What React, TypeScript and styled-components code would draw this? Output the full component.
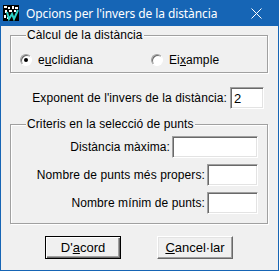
import React from 'react';
import styled, { createGlobalStyle } from 'styled-components';

const GlobalStyle = createGlobalStyle`
  html, body {
    margin: 0;
    padding: 0;
    background: #ffffff;
  }
`;

const Window = styled.div`
  box-sizing: border-box;
  width: 279px;
  height: 271px;
  background: #f0f0f0;
  border: 1px solid #1665b5;
  border-top: none;
  font-family: 'Liberation Sans', Arial, sans-serif;
  font-size: 12px;
  letter-spacing: 0.1px;
  color: #000;
  display: flex;
  flex-direction: column;
`;

const TitleBar = styled.div`
  height: 26px;
  margin: 0 -1px;
  background: #1665b5;
  color: #fff;
  display: flex;
  align-items: center;
  padding: 0 0 0 3px;
  font-family: 'Noto Sans', 'Liberation Sans', sans-serif;
  font-size: 12px;
`;

const TitleText = styled.span`
  margin-left: 7px;
  flex: 1;
  letter-spacing: -0.1px;
`;

const CloseBox = styled.div`
  width: 46px;
  height: 26px;
  display: flex;
  align-items: center;
  justify-content: center;
  margin-left: auto;
  padding-left: 12px;
`;

const Body = styled.div`
  padding: 3px 10px 0 9px;
  display: flex;
  flex-direction: column;
`;

const Group = styled.fieldset<{ $pad: string }>`
  margin: 0;
  min-width: 0;
  padding: ${(p) => p.$pad};
  border: 1px solid #a0a0a0;
  box-shadow: inset 1px 1px 0 #fff, 1px 1px 0 #fff;
`;

const Caption = styled.legend`
  padding: 0 1px 0 1px;
  margin-left: 6px;
  line-height: 13px;
  background: #f0f0f0;
`;

const RadioRow = styled.div`
  display: flex;
  height: 13px;
  align-items: center;
`;

const RadioLabel = styled.label<{ $width: number }>`
  display: flex;
  align-items: center;
  width: ${(p) => p.$width}px;
`;

const RadioDot = styled.span<{ $on?: boolean }>`
  box-sizing: border-box;
  position: relative;
  width: 12px;
  height: 12px;
  border-radius: 50%;
  background: #fff;
  border: 1px solid;
  border-color: #a0a0a0 #fff #fff #a0a0a0;
  box-shadow: inset 1px 1px 0 #696969;
  margin-right: 6px;
  &::after {
    content: '';
    display: ${(p) => (p.$on ? 'block' : 'none')};
    position: absolute;
    left: 3px;
    top: 3px;
    width: 4px;
    height: 4px;
    border-radius: 50%;
    background: #000;
  }
`;

const ExpRow = styled.div`
  display: flex;
  align-items: center;
  justify-content: flex-end;
  margin: 14px 4px 9px 0;
  gap: 3px;
`;

const FieldRow = styled.div`
  display: flex;
  align-items: center;
  justify-content: flex-end;
  gap: 2px;
  height: 22px;
  & + & {
    margin-top: 6px;
  }
`;

const Input = styled.div<{ $width: number }>`
  box-sizing: border-box;
  width: ${(p) => p.$width}px;
  height: 22px;
  background: #fff;
  border: 1px solid;
  border-color: #a0a0a0 #fff #fff #a0a0a0;
  box-shadow: inset 1px 1px 0 #696969, inset -1px -1px 0 #e3e3e3;
  padding: 3px 3px 0 3px;
  font-size: 13px;
  line-height: 15px;
`;

const Buttons = styled.div`
  display: flex;
  gap: 36px;
  padding-left: 35px;
  margin-top: 12px;
`;

const Button = styled.div<{ $default?: boolean }>`
  box-sizing: border-box;
  width: 76px;
  height: 23px;
  display: flex;
  align-items: center;
  justify-content: center;
  background: #f0f0f0;
  border: 1px solid;
  border-color: ${(p) => (p.$default ? '#000' : '#fff #696969 #696969 #fff')};
  box-shadow: ${(p) =>
    p.$default
      ? 'inset 1px 1px 0 #fff, inset -1px -1px 0 #696969, inset -2px -2px 0 #a0a0a0'
      : 'inset -1px -1px 0 #a0a0a0, inset 1px 1px 0 #e3e3e3'};
  font-size: 13px;
  letter-spacing: 0;
`;

const Key = styled.u`
  text-underline-offset: 1px;
`;

const AppIcon = () => (
  <svg width="16" height="16" viewBox="0 0 16 16">
    <rect x="0" y="0" width="16" height="16" fill="#000" />
    <rect x="1" y="1" width="3" height="2" fill="#fff" />
    <rect x="5" y="2" width="2" height="2" fill="#fff" />
    <rect x="9" y="1" width="2" height="3" fill="#fff" />
    <rect x="12" y="2" width="3" height="2" fill="#fff" />
    <rect x="2" y="5" width="2" height="3" fill="#fff" />
    <rect x="6" y="5" width="3" height="2" fill="#fff" />
    <rect x="11" y="5" width="2" height="2" fill="#fff" />
    <rect x="1" y="10" width="2" height="3" fill="#fff" />
    <rect x="4" y="12" width="2" height="2" fill="#fff" />
    <path d="M4 7 L6 14 L9 9 L11 14 L15 5" stroke="#2fd3c8" strokeWidth="2" fill="none" />
  </svg>
);

const CloseIcon = () => (
  <svg width="11" height="11" viewBox="0 0 11 11">
    <path d="M0.5 0.5 L10.5 10.5 M10.5 0.5 L0.5 10.5" stroke="#fff" strokeWidth="1" />
  </svg>
);

export default function App() {
  return (
    <>
      <GlobalStyle />
      <Window>
        <TitleBar>
          <AppIcon />
          <TitleText>Opcions per l'invers de la distància</TitleText>
          <CloseBox>
            <CloseIcon />
          </CloseBox>
        </TitleBar>
        <Body>
          <Group $pad="11px 9px 6px 9px">
            <Caption>Càlcul de la distància</Caption>
            <RadioRow>
              <RadioLabel $width={131}>
                <RadioDot $on />
                <span>
                  e<Key>u</Key>clidiana
                </span>
              </RadioLabel>
              <RadioLabel $width={100}>
                <RadioDot />
                <span>
                  Ei<Key>x</Key>ample
                </span>
              </RadioLabel>
            </RadioRow>
          </Group>
          <ExpRow>
            <span>Exponent de l'invers de la distància:</span>
            <Input $width={34}>2</Input>
          </ExpRow>
          <Group $pad="5px 9px 9px 9px">
            <Caption>Criteris en la selecció de punts</Caption>
            <FieldRow>
              <span>Distància màxima:</span>
              <Input $width={86} />
            </FieldRow>
            <FieldRow>
              <span>Nombre de punts més propers:</span>
              <Input $width={51} />
            </FieldRow>
            <FieldRow>
              <span>Nombre mínim de punts:</span>
              <Input $width={51} />
            </FieldRow>
          </Group>
          <Buttons>
            <Button $default>
              <span>
                D'<Key>a</Key>cord
              </span>
            </Button>
            <Button>
              <span>
                <Key>C</Key>ancel·lar
              </span>
            </Button>
          </Buttons>
        </Body>
      </Window>
    </>
  );
}
